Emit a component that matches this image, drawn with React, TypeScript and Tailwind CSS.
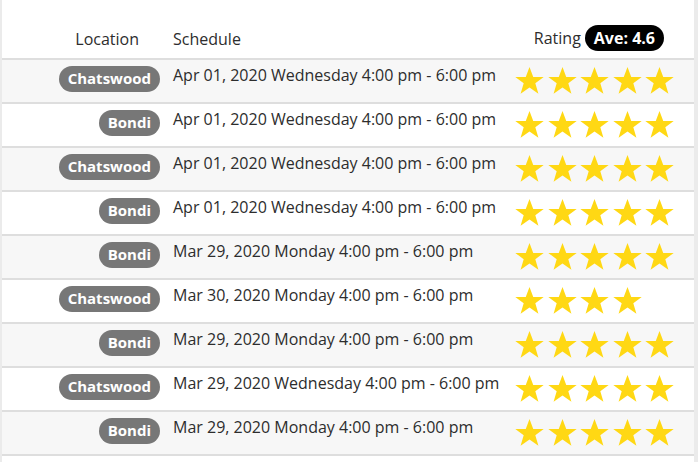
import React from "react";

type Row = { loc: string; when: string; stars: number; shade: boolean };

const ROWS: Row[] = [
  { loc: "Chatswood", when: "Apr 01, 2020 Wednesday 4:00 pm - 6:00 pm", stars: 5, shade: true },
  { loc: "Bondi", when: "Apr 01, 2020 Wednesday 4:00 pm - 6:00 pm", stars: 5, shade: false },
  { loc: "Chatswood", when: "Apr 01, 2020 Wednesday 4:00 pm - 6:00 pm", stars: 5, shade: true },
  { loc: "Bondi", when: "Apr 01, 2020 Wednesday 4:00 pm - 6:00 pm", stars: 5, shade: false },
  { loc: "Bondi", when: "Mar 29, 2020 Monday 4:00 pm - 6:00 pm", stars: 5, shade: true },
  { loc: "Chatswood", when: "Mar 30, 2020 Monday 4:00 pm - 6:00 pm", stars: 4, shade: false },
  { loc: "Bondi", when: "Mar 29, 2020 Monday 4:00 pm - 6:00 pm", stars: 5, shade: true },
  { loc: "Chatswood", when: "Mar 29, 2020 Wednesday 4:00 pm - 6:00 pm", stars: 5, shade: false },
  { loc: "Bondi", when: "Mar 29, 2020 Monday 4:00 pm - 6:00 pm", stars: 5, shade: true },
];

function Star() {
  return (
    <svg viewBox="0 0 24 24" className="h-[31px] w-[31px]" aria-hidden>
      <polygon
        fill="#ffd814"
        points="12,1.5 14.9,9.2 23,9.2 16.5,14.2 18.9,22.2 12,17.4 5.1,22.2 7.5,14.2 1,9.2 9.1,9.2"
      />
    </svg>
  );
}

export default function App() {
  return (
    <div className="h-[462px] w-[698px] overflow-hidden bg-[#ebebeb] font-['Open_Sans',sans-serif] text-[16px] text-[#2d2d2d]">
      <div className="ml-[2px] h-full w-[692px] bg-white">
        {/* Header */}
        <div className="flex h-[60px] items-end border-b-2 border-[#dedede] pb-[7px]">
          <div className="w-[137px] text-right">Location</div>
          <div className="ml-[34px] flex-1">Schedule</div>
          <div className="mr-[30px] flex items-center gap-[4px]">
            <span>Rating</span>
            <span className="rounded-full bg-black px-[9px] py-[1px] font-bold text-white">Ave: 4.6</span>
          </div>
        </div>

        {ROWS.map((r, i) => (
          <div
            key={i}
            className={`flex h-[44px] border-b-2 border-[#dedede] ${r.shade ? "bg-[#f7f7f7]" : "bg-white"}`}
          >
            <div className="flex w-[158px] justify-end pt-[6px]">
              <span className="h-[26px] rounded-[13px] bg-[#777] px-[9px] pt-[1px] text-[15px] font-bold text-white">
                {r.loc}
              </span>
            </div>
            <div className="ml-[13px] flex-1 pt-[3px]">{r.when}</div>
            <div className="flex w-[180px] gap-[1.5px] pt-[5px]">
              {Array.from({ length: r.stars }).map((_, k) => (
                <Star key={k} />
              ))}
            </div>
          </div>
        ))}
      </div>
    </div>
  );
}
